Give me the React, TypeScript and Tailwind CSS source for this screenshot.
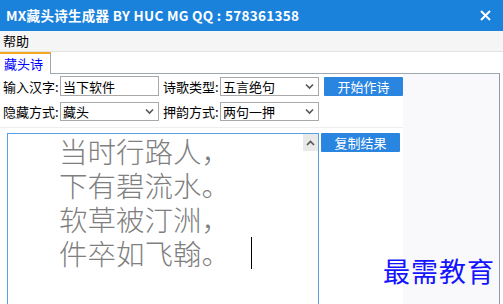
export default function App() {
  const poem = ["当时行路人，", "下有碧流水。", "软草被汀洲，", "件卒如飞翰。"];
  const font = { fontFamily: '"Noto Sans CJK SC", "Microsoft YaHei", sans-serif' };

  const Chevron = () => (
    <svg width="9" height="7" viewBox="0 0 9 7" className="text-[#555] shrink-0">
      <path d="M1 1.5 L4.5 5 L8 1.5" fill="none" stroke="currentColor" strokeWidth="1.6" />
    </svg>
  );

  const Label = ({ text, first }: { text: string; first?: boolean }) => (
    <span
      className={
        first
          ? "w-[60px] shrink-0 pl-[3px] whitespace-nowrap leading-none"
          : "w-[61px] shrink-0 pl-[4px] whitespace-nowrap leading-none"
      }
    >
      {text}
    </span>
  );

  const Select = ({ value }: { value: string }) => (
    <div className="w-[99px] h-[19px] shrink-0 border border-[#a9a9a9] bg-white flex items-center justify-between pl-[2px] pr-[4px] text-[13px] text-black">
      <span className="leading-none whitespace-nowrap">{value}</span>
      <Chevron />
    </div>
  );

  return (
    <div className="w-[503px] h-[304px] overflow-hidden relative bg-white" style={font}>
      {/* title bar */}
      <div className="h-[31px] bg-[#1b82dc] flex items-center justify-between pl-[6px] pr-[12px]">
        <span className="text-white font-bold text-[13.5px] tracking-[0.3px] leading-none whitespace-nowrap">MX藏头诗生成器 BY HUC MG QQ : 578361358</span>
        <svg width="11" height="11" viewBox="0 0 11 11">
          <path d="M1 1 L10 10 M10 1 L1 10" stroke="white" strokeWidth="2" />
        </svg>
      </div>

      {/* menu */}
      <div className="h-[21px] bg-[#f5f5f5] border-b border-[#e2e2e2] flex items-center pl-[3px] text-[13px] text-black">
        帮助
      </div>

      {/* tabs */}
      <div className="h-[22px] flex">
        <div className="w-[51px] border-t-2 border-t-[#f5a623] border-r border-r-[#a0a6ad] bg-white text-[13px] text-[#0000ff] pl-[4px] flex items-center">
          藏头诗
        </div>
        <div className="flex-1 border-b border-[#a0a6ad] mr-[3px]"></div>
      </div>

      {/* panel */}
      <div className="w-[500px] h-[231px] border-r border-[#8f9aa6] flex">
        <div className="w-[403px] bg-white flex flex-col">
          <div className="flex flex-col gap-[6px] pt-[2px] text-[13px] text-black">
            <div className="flex items-center h-[20px]">
              <Label text="输入汉字:" first />
              <div className="w-[99px] h-[20px] shrink-0 border border-[#a9a9a9] pl-[2px] flex items-center leading-none">当下软件</div>
              <Label text="诗歌类型:" />
              <Select value="五言绝句" />
              <button className="ml-[5px] w-[79px] h-[19px] shrink-0 bg-[#2a85e0] text-white text-[13px] flex items-center justify-center rounded-[1px] leading-none">
                开始作诗
              </button>
            </div>
            <div className="flex items-center h-[19px]">
              <Label text="隐藏方式:" first />
              <Select value="藏头" />
              <Label text="押韵方式:" />
              <Select value="两句一押" />
            </div>
          </div>

          <div className="mt-[6px] border-t border-[#eeeeee] flex-1 flex pt-[5px]">
            <div className="ml-[7px] w-[312px] h-[200px] shrink-0 border border-[#5aa0e6] relative">
              <div className="pl-[51px] text-[28.5px] leading-[34px] font-light text-[#7f7f7f]">
                {poem.map((line, i) => (
                  <div key={i} className="flex items-center h-[34px]">
                    {line}
                    {i === 3 && <span className="ml-[21px] w-px h-[32px] bg-black"></span>}
                  </div>
                ))}
              </div>
              <div className="absolute top-0 right-0 w-[15px] h-[17px] bg-[#e9e9e9] flex items-center justify-center">
                <svg width="9" height="6" viewBox="0 0 9 6">
                  <path d="M1 5 L4.5 1.5 L8 5" fill="none" stroke="#555" strokeWidth="1.6" />
                </svg>
              </div>
            </div>
            <button className="ml-[2px] w-[79px] h-[19px] shrink-0 bg-[#2a85e0] text-white text-[13px] flex items-center justify-center rounded-[1px] leading-none">
              复制结果
            </button>
          </div>
        </div>
        <div className="flex-1 bg-[#f9f9fc]"></div>
      </div>

      {/* watermark */}
      <div className="absolute left-[383px] top-[257px] text-[27px] tracking-[1px] text-[#1414ff] leading-none whitespace-nowrap">
        最需教育
      </div>
    </div>
  );
}
